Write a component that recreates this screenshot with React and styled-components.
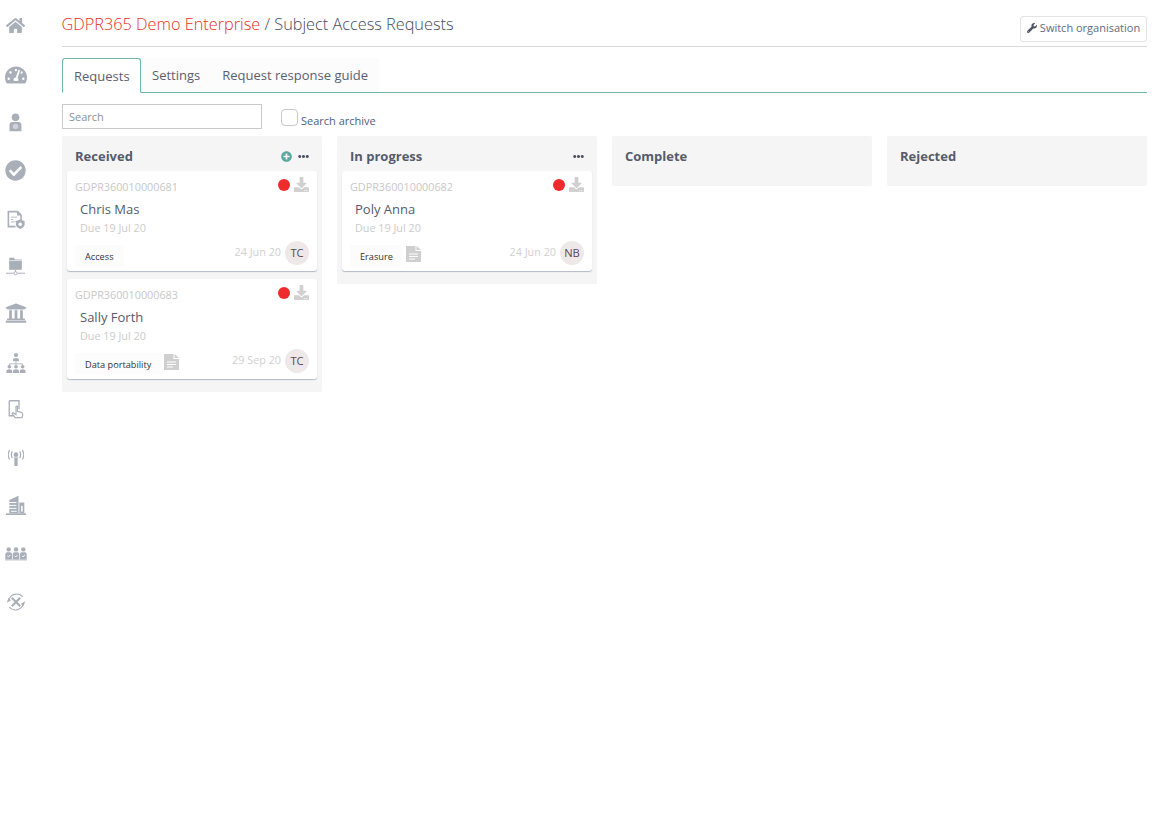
import React from 'react';
import styled, { createGlobalStyle } from 'styled-components';
import { FaHome, FaTachometerAlt, FaCheckCircle, FaDownload, FaWrench, FaPlusCircle, FaEllipsisH, FaUniversity } from 'react-icons/fa';

const Global = createGlobalStyle`
  html, body { margin: 0; padding: 0; background: #fff; }
  body { font-family: "Open Sans", "Liberation Sans", sans-serif; color: #4f5467; }
  * { box-sizing: border-box; }
`;
const Page = styled.div`display: flex; width: 1160px; height: 816px; overflow: hidden;`;
const Rail = styled.nav`width: 62px; flex: none; display: flex; flex-direction: column; align-items: center; padding: 14px 31px 0 0;`;
const RailItem = styled.div`width: 24px; height: 48px; flex: none; display: flex; justify-content: center; padding-top: ${p => p.$top}px; color: #a9afb9; svg { display: block; }`;
const Main = styled.main`width: 1085px; flex: none; display: flex; flex-direction: column;`;
const Top = styled.header`height: 47px; border-bottom: 1px solid #d9d9d9; display: flex; justify-content: space-between;`;
const Title = styled.h1`margin: 13px 0 0 -0.500px; font-size: 16.300px; line-height: 22px; font-weight: 300; color: #454b5e;`;
const Org = styled.span`color: #e62f1a;`;
const SwitchBtn = styled.button`margin-top: 16px; width: 127px; height: 26px; border: 1px solid #e3e3e3; border-radius: 3px; background: #fff; color: #5d6b82; font: 400 11px/22px "Open Sans", sans-serif; display: flex; align-items: flex-start; justify-content: center; gap: 3px; padding: 0; svg { color: #4f5467; width: 10px; height: 10px; margin-top: 6px; }`;
const Tabs = styled.div`display: flex; margin-top: 11px; height: 35px; border-bottom: 1px solid #6fb5aa;`;
const Tab = styled.div`height: 34px; padding: 0 11px; display: flex; align-items: center; font-size: 13px; color: #5a6070; background: #fcfcfc;`;
const ActiveTab = styled(Tab)`height: 35px; width: 79px; background: #fff; border: 1px solid #6fb5aa; border-bottom-color: #fff; border-radius: 3px 3px 0 0;`;
const Filters = styled.div`display: flex; margin-top: 11px; height: 25px;`;
const Search = styled.input`width: 200px; height: 25px; border: 1px solid #c9c9c9; padding: 0 6px; font: 400 11px "Open Sans", sans-serif; color: #6d7482; outline: none; &::placeholder { color: #8a919c; opacity: 1; }`;
const Archive = styled.label`margin-left: 19px; display: flex; font-size: 11px; color: #4d6078; height: 25px;`;
const Box = styled.span`width: 17px; height: 17px; border: 1px solid #c8c8c8; border-radius: 4px; display: block; margin: 5px 3px 0 0;`;
const ArchiveText = styled.span`line-height: 13px; margin-top: 10px;`;
const Board = styled.div`display: grid; grid-template-columns: repeat(4, 260px); gap: 15px; margin-top: 7px; align-items: start;`;
const Column = styled.section`background: #f5f5f5; border-radius: 2px; padding: 0 5px ${p => p.$empty ? '0' : '5px'}; min-height: 50px;`;
const ColHead = styled.div`height: 35px; padding: 12px 8px 0; display: flex; justify-content: space-between; align-items: flex-start;`;
const ColTitle = styled.h2`margin: 0; font-size: 13px; line-height: 17px; font-weight: 700; color: #565b6a;`;
const ColTools = styled.div`display: flex; align-items: center; gap: 6px; height: 16px; color: #4f5467;`;
const Cards = styled.div`display: flex; flex-direction: column; gap: 8px; padding-bottom: 8px;`;
const Card = styled.article`height: 100px; background: #fff; border-radius: 3px; box-shadow: 0 1px 1px #b4bac8; padding: 0 8px; position: relative;`;
const CardTop = styled.div`display: flex; justify-content: space-between; height: 30px;`;
const Ref = styled.span`font-size: 10.800px; line-height: 15px; margin-top: 8px; color: #c8c8c8;`;
const Flags = styled.div`display: flex; gap: 4px; align-items: flex-start; margin-top: 6px; color: #d0d0d0;`;
const Dot = styled.span`width: 12px; height: 12px; border-radius: 50%; background: #ef2b2b; margin-top: 2px;`;
const Name = styled.div`font-size: 13px; line-height: 16px; color: #555b6b; margin: 0 0 0 5px;`;
const Due = styled.div`font-size: 10.800px; line-height: 14px; margin: 4px 0 0 5px; color: #cbcbcb;`;
const Foot = styled.div`position: absolute; left: 8px; right: 8px; bottom: 6px; height: 24px; display: flex; align-items: center;`;
const Tag = styled.span`height: 21px; margin-top: 5px; padding: 2px 10px 0; display: flex; align-items: center; background: #fcfcfc; font-size: 9.200px; color: #333; border-radius: 2px;`;
const DocSvg = styled.svg`width: 15px; height: 16px; margin: 2px 0 0 3px; color: #cfcfcf; flex: none;`;
const Date_ = styled.span`font-size: 10.800px; color: #d0d0d0; margin: 0 4px 4px auto;`;
const Avatar = styled.span`width: 24px; height: 24px; border-radius: 50%; background: #efe8e8; color: #5b4552; font-size: 11.200px; padding-bottom: 1px; display: flex; align-items: center; justify-content: center;`;

const Doc = () => (
  <DocSvg viewBox="0 0 15 16" fill="currentColor">
    <path d="M0 0h9.500v5H15v11H0z" />
    <path d="M10.500 0L15 4h-4.500z" />
    <path d="M3 8h9M3 10.500h9M3 13h6" stroke="#fff" strokeWidth="1" />
  </DocSvg>
);

const S = ({ children, w = 24, h = 24, vb = '0 0 24 24' }) => <svg width={w} height={h} viewBox={vb} fill="currentColor">{children}</svg>;
const Person = () => <S w={19} h={19}><circle cx="12" cy="5.500" r="4.800"/><path d="M4.500 23v-7.500q0-4 4-4h7q4 0 4 4V23z"/><circle cx="12" cy="17" r="3.500" fill="#cfd3d9"/></S>;
const DocShield = () => <S w={19} h={19}><path d="M2 1h13l5 5v7h-2V7h-4V3H4v17h8v2H2z"/><path d="M6 9h8M6 12h3M6 15h6" stroke="currentColor" fill="none" strokeWidth="1"/><path d="M18 12l5.500 2v4q0 4-5.500 6-5.500-2-5.500-6v-4z"/><circle cx="18" cy="18" r="2.200" fill="#fff"/></S>;
const FolderNet = () => <S w={19} h={21}><path d="M4 1h6l1 2h9v13H4z" /><path d="M4 4.500h16" stroke="#fff" strokeWidth=".8"/><path d="M12 16v3M0 20.500h9.500M14.500 20.500H24" stroke="currentColor" fill="none" strokeWidth="1.200"/><circle cx="12" cy="20.500" r="2" fill="#fff" stroke="currentColor" strokeWidth="1.200"/></S>;
const Org1 = () => <S w={20} h={20}><circle cx="12" cy="2.500" r="2.500"/><path d="M8.500 10V8q0-2 3.500-2t3.500 2v2z"/><path d="M12 10v3M4 15v-2h16v2M12 13v2" stroke="currentColor" fill="none" strokeWidth="1"/>{[4,12,20].map(x => <g key={x}><circle cx={x} cy="16.500" r="2.200"/><path d={`M${x-3.500} 24v-2.500q0-2 3.500-2t3.500 2V24z`}/></g>)}</S>;
const Touch = () => <S w={18} h={20}><path d="M3 1h13v11M3 1v20h7" fill="none" stroke="currentColor" strokeWidth="1.800"/><path d="M12 8.500q1.500-1 2 .5v6l5 1.500q2 .5 2 3l-1 4h-9l-4-5q0-2 2-1l3 2z" fill="#fff" stroke="currentColor" strokeWidth="1.600"/></S>;
const Mast = () => <S w={16} h={20}><circle cx="12" cy="7" r="3.500"/><rect x="9.500" y="11" width="5" height="13"/><path d="M6.500 2q-3 5 0 10M17.500 2q3 5 0 10M2.500 0q-4.500 7 0 14M21.500 0q4.500 7 0 14" fill="none" stroke="currentColor" strokeWidth="1.800"/></S>;
const Building = () => <S w={20} h={20}><path d="M4 22V6l11-5v21z"/><path d="M16 9h6v13h-6z"/><path d="M0 23h24" stroke="currentColor" strokeWidth="2"/><path d="M1.500 9h11M1.500 12.500h11M1.500 16h11M6 19.500h7" stroke="#fff" strokeWidth="1.200"/><rect x="18.200" y="13" width="1.800" height="7" fill="#fff"/></S>;
const Team = () => <S w={22} h={22}>{[4,12,20].map(x => <g key={x}><circle cx={x} cy="7" r="2.400"/><path d={`M${x-3.600} 18v-6q0-2 2-2h3.200q2 0 2 2v6z`}/><path d={`M${x-1.500} 14l1.200 1.200 2-2.200`} fill="none" stroke="#fff" strokeWidth="1"/></g>)}<path d="M0 18.500h24" stroke="currentColor" strokeWidth=".8"/></S>;
const Tools = () => <S w={20} h={20}><path d="M4 8a9.500 9.500 0 0 1 16-2M20 16a9.500 9.500 0 0 1-16 2" fill="none" stroke="currentColor" strokeWidth="1.300"/><path d="M1 13l2-6 3 3zM23 11l-2 6-3-3z"/><path d="M7 7l10 10M17 7L7 17" stroke="currentColor" strokeWidth="2.600"/></S>;

const railIcons = [
  [<FaHome size={19} />, 2], [<FaTachometerAlt size={22} />, 2], [<Person />, 3], [<FaCheckCircle size={21} />, 2], [<DocShield />, 4],
  [<FolderNet />, 2], [<FaUniversity size={22} />, 0], [<Org1 />, 3], [<Touch />, 1], [<Mast />, 2], [<Building />, 1], [<Team />, 1], [<Tools />, 2],
];

const data = [
  { title: 'Received', add: true, more: true, cards: [
    { ref: 'GDPR360010000681', name: 'Chris Mas', tag: 'Access', date: '24 Jun 20', who: 'TC' },
    { ref: 'GDPR360010000683', name: 'Sally Forth', tag: 'Data portability', doc: true, date: '29 Sep 20', who: 'TC' },
  ]},
  { title: 'In progress', more: true, cards: [
    { ref: 'GDPR360010000682', name: 'Poly Anna', tag: 'Erasure', doc: true, date: '24 Jun 20', who: 'NB' },
  ]},
  { title: 'Complete', cards: [] },
  { title: 'Rejected', cards: [] },
];

export default function App() {
  return (
    <Page>
      <Global />
      <Rail>{railIcons.map(([ic, top], i) => <RailItem key={i} $top={top}>{ic}</RailItem>)}</Rail>
      <Main>
        <Top>
          <Title><Org>GDPR365 Demo Enterprise</Org> / Subject Access Requests</Title>
          <SwitchBtn><FaWrench /> Switch organisation</SwitchBtn>
        </Top>
        <Tabs>
          <ActiveTab>Requests</ActiveTab>
          <Tab>Settings</Tab>
          <Tab>Request response guide</Tab>
        </Tabs>
        <Filters>
          <Search placeholder="Search" />
          <Archive><Box /><ArchiveText>Search archive</ArchiveText></Archive>
        </Filters>
        <Board>
          {data.map(col => (
            <Column key={col.title} $empty={!col.cards.length}>
              <ColHead>
                <ColTitle>{col.title}</ColTitle>
                <ColTools>
                  {col.add && <FaPlusCircle size={11} color="#5aa9a0" />}
                  {col.more && <FaEllipsisH size={11} />}
                </ColTools>
              </ColHead>
              {col.cards.length > 0 && (
                <Cards>
                  {col.cards.map(c => (
                    <Card key={c.ref}>
                      <CardTop>
                        <Ref>{c.ref}</Ref>
                        <Flags><Dot /><FaDownload size={15} /></Flags>
                      </CardTop>
                      <Name>{c.name}</Name>
                      <Due>Due 19 Jul 20</Due>
                      <Foot>
                        <Tag>{c.tag}</Tag>
                        {c.doc && <Doc />}
                        <Date_>{c.date}</Date_>
                        <Avatar>{c.who}</Avatar>
                      </Foot>
                    </Card>
                  ))}
                </Cards>
              )}
            </Column>
          ))}
        </Board>
      </Main>
    </Page>
  );
}
